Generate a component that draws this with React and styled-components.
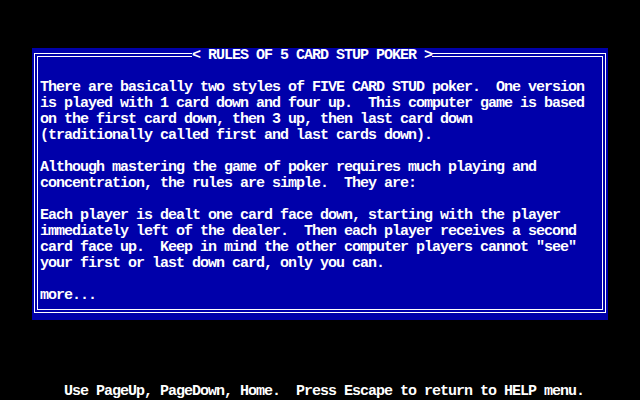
import React from 'react'
import styled, { createGlobalStyle } from 'styled-components'

const GlobalStyle = createGlobalStyle`
    html, body {
        margin: 0;
        padding: 0;
        background: #000;
    }
`

const Screen = styled.div`
    width: 640px;
    height: 400px;
    background: #000;
    color: #fff;
    display: flex;
    flex-direction: column;
    font-family: "Liberation Mono", "DejaVu Sans Mono", monospace;
    font-weight: bold;
    font-size: 15px;
    letter-spacing: -1px;
    line-height: 16px;
    overflow: hidden;
`

const Window = styled.section`
    position: relative;
    box-sizing: border-box;
    margin: 48px 0 0 32px;
    width: 576px;
    height: 272px;
    padding: 5px 2px 7px 2px;
    background: #0000aa;
    display: flex;
`

const OuterFrame = styled.div`
    flex: 1;
    display: flex;
    border: 1px solid #fff;
    padding: 2px;
`

const InnerFrame = styled.div`
    flex: 1;
    border: 1px solid #fff;
    padding: 23px 0 0 2px;
`

const Title = styled.h1`
    position: absolute;
    top: 0;
    left: 160px;
    margin: 0;
    font: inherit;
    background: #0000aa;
    white-space: pre;
    height: 16px;
`

const Paragraph = styled.div`
    margin-bottom: ${p => (p.$last ? 0 : 16)}px;
`

const Line = styled.div`
    height: 16px;
    white-space: pre;
`

const Footer = styled.div`
    margin-top: 64px;
    padding-left: 64px;
    height: 16px;
    white-space: pre;
`

const paragraphs = [
    [
        'There are basically two styles of FIVE CARD STUD poker.  One version',
        'is played with 1 card down and four up.  This computer game is based',
        'on the first card down, then 3 up, then last card down',
        '(traditionally called first and last cards down).',
    ],
    [
        'Although mastering the game of poker requires much playing and',
        'concentration, the rules are simple.  They are:',
    ],
    [
        'Each player is dealt one card face down, starting with the player',
        'immediately left of the dealer.  Then each player receives a second',
        'card face up.  Keep in mind the other computer players cannot "see"',
        'your first or last down card, only you can.',
    ],
    ['more...'],
]

export default function App() {
    return (
        <>
            <GlobalStyle />
            <Screen>
                <Window>
                    <OuterFrame>
                        <InnerFrame>
                            {paragraphs.map((lines, i) => (
                                <Paragraph key={i} $last={i === paragraphs.length - 1}>
                                    {lines.map((l, j) => (
                                        <Line key={j}>{l}</Line>
                                    ))}
                                </Paragraph>
                            ))}
                        </InnerFrame>
                    </OuterFrame>
                    <Title>{'< RULES OF 5 CARD STUP POKER >'}</Title>
                </Window>
                <Footer>Use PageUp, PageDown, Home.  Press Escape to return to HELP menu.</Footer>
            </Screen>
        </>
    )
}
